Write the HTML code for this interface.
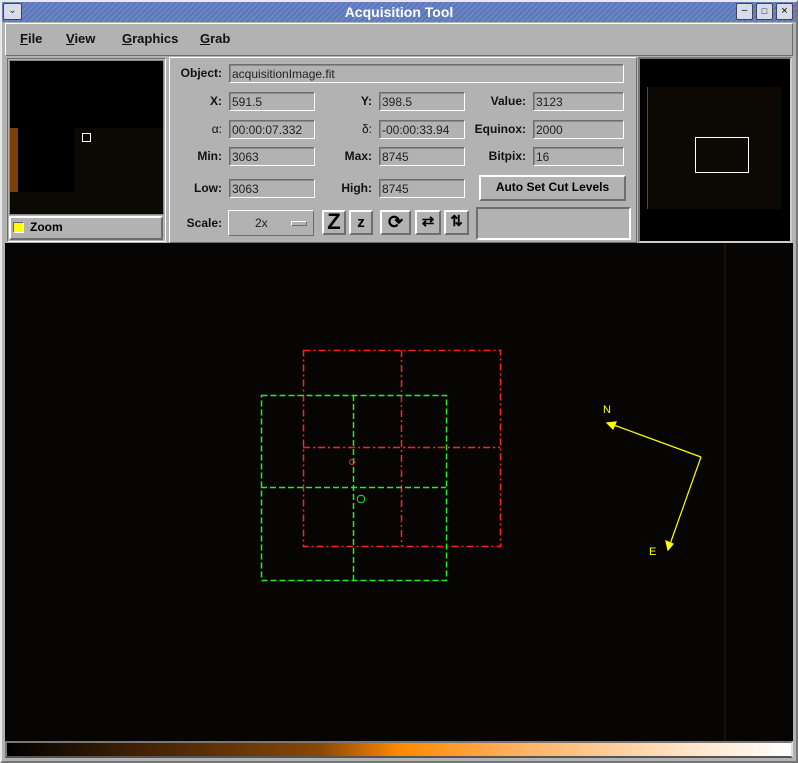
<!DOCTYPE html>
<html><head><style>
*{margin:0;padding:0;box-sizing:border-box}
body{width:798px;height:763px;background:#b2b2b2;font-family:"Liberation Sans",sans-serif;position:relative;overflow:hidden}
.a{position:absolute}
.t{font-size:12px;font-weight:bold;color:#111;text-align:right}
.f{position:absolute;background:#b2b2b2;border:1px solid;border-color:#6e6e6e #fff #fff #6e6e6e;box-shadow:inset 1px 1px 0 #8a8a8a;font-size:12px;color:#222;padding:2px 0 0 2px;height:19px}
.b{position:absolute;background:#b2b2b2;border:2px solid;border-color:#fff #6e6e6e #6e6e6e #fff}
.m{position:absolute;top:31px;font-size:13px;font-weight:bold;color:#111}
</style></head><body>
<div class="a" style="left:0;top:0;width:798px;height:763px;border:2px solid;border-color:#e8e8e8 #777 #777 #e8e8e8"></div>
<!-- title -->
<div class="a" style="left:2px;top:2px;width:794px;height:20px;background:repeating-linear-gradient(135deg,#6a86c4 0 2px,#5b77b8 2px 4px)"></div>
<div class="a" style="left:3px;top:3px;width:19px;height:17px;background:#d8dce8;border:1px solid #445;border-radius:2px;font-size:10px;text-align:center;color:#334;line-height:14px">&#8964;</div>
<div class="a" style="left:0;top:3px;width:798px;text-align:center;color:#fff;font-size:14px;font-weight:bold;line-height:18px">Acquisition Tool</div>
<div class="a" style="left:736px;top:3px;width:17px;height:17px;background:#d8dce8;border:1px solid #445;border-radius:2px;font-size:10px;text-align:center;line-height:14px">&#8211;</div>
<div class="a" style="left:756px;top:3px;width:17px;height:17px;background:#d8dce8;border:1px solid #445;border-radius:2px;font-size:9px;text-align:center;line-height:14px">&#9633;</div>
<div class="a" style="left:776px;top:3px;width:17px;height:17px;background:#d8dce8;border:1px solid #445;border-radius:2px;font-size:11px;text-align:center;line-height:14px">&#215;</div>
<!-- menu -->
<div class="a" style="left:5px;top:23px;width:788px;height:33px;border:1px solid;border-color:#fff #6e6e6e #6e6e6e #fff"></div>
<div class="m" style="left:20px"><u>F</u>ile</div>
<div class="m" style="left:66px"><u>V</u>iew</div>
<div class="m" style="left:122px"><u>G</u>raphics</div>
<div class="m" style="left:200px"><u>G</u>rab</div>
<!-- zoom panel -->
<div class="a" style="left:7px;top:58px;width:159px;height:184px;border:1px solid;border-color:#6e6e6e #fff #fff #6e6e6e"></div>
<div class="a" style="left:9px;top:60px;width:155px;height:155px;background:#000;border:1px solid #888"></div>
<div class="a" style="left:75px;top:128px;width:88px;height:86px;background:#0c0804"></div>
<div class="a" style="left:10px;top:128px;width:8px;height:64px;background:#7a4008"></div>
<div class="a" style="left:10px;top:192px;width:153px;height:22px;background:#0c0804"></div>
<div class="a" style="left:82px;top:133px;width:9px;height:9px;border:1px solid #fff"></div>
<div class="b" style="left:9px;top:216px;width:154px;height:24px"></div>
<div class="a" style="left:13px;top:222px;width:11px;height:11px;background:#ff0;border:1px solid;border-color:#666 #fff #fff #666"></div>
<div class="a" style="left:30px;top:220px;font-size:12px;font-weight:bold">Zoom</div>
<!-- info panel -->
<div class="a" style="left:169px;top:57px;width:468px;height:186px;border:1px solid;border-color:#fff #6e6e6e #6e6e6e #fff"></div>
<div class="a t" style="left:150px;top:66px;width:72px">Object:</div>
<div class="f" style="left:229px;top:64px;width:395px">acquisitionImage.fit</div>
<div class="a t" style="left:150px;top:94px;width:72px">X:</div>
<div class="f" style="left:229px;top:92px;width:86px">591.5</div>
<div class="a t" style="left:300px;top:94px;width:72px">Y:</div>
<div class="f" style="left:379px;top:92px;width:86px">398.5</div>
<div class="a t" style="left:450px;top:94px;width:76px">Value:</div>
<div class="f" style="left:533px;top:92px;width:91px">3123</div>
<div class="a t" style="left:150px;top:122px;width:72px;font-weight:normal">&#945;:</div>
<div class="f" style="left:229px;top:120px;width:86px">00:00:07.332</div>
<div class="a t" style="left:300px;top:122px;width:72px;font-weight:normal">&#948;:</div>
<div class="f" style="left:379px;top:120px;width:86px">-00:00:33.94</div>
<div class="a t" style="left:450px;top:122px;width:76px">Equinox:</div>
<div class="f" style="left:533px;top:120px;width:91px">2000</div>
<div class="a t" style="left:150px;top:149px;width:72px">Min:</div>
<div class="f" style="left:229px;top:147px;width:86px">3063</div>
<div class="a t" style="left:300px;top:149px;width:72px">Max:</div>
<div class="f" style="left:379px;top:147px;width:86px">8745</div>
<div class="a t" style="left:450px;top:149px;width:76px">Bitpix:</div>
<div class="f" style="left:533px;top:147px;width:91px">16</div>
<div class="a t" style="left:150px;top:181px;width:72px">Low:</div>
<div class="f" style="left:229px;top:179px;width:86px;border-color:#6e6e6e #fff #fff #6e6e6e">3063</div>
<div class="a t" style="left:300px;top:181px;width:72px">High:</div>
<div class="f" style="left:379px;top:179px;width:86px">8745</div>
<div class="b" style="left:479px;top:175px;width:147px;height:26px;font-size:12px;font-weight:bold;text-align:center;line-height:21px">Auto Set Cut Levels</div>
<div class="a t" style="left:150px;top:216px;width:72px">Scale:</div>
<div class="b" style="left:228px;top:210px;width:86px;height:26px;border-width:1px"></div>
<div class="a" style="left:255px;top:216px;font-size:12px;color:#222">2x</div>
<div class="b" style="left:291px;top:221px;width:16px;height:5px;border-width:1px"></div>
<div class="b" style="left:322px;top:210px;width:24px;height:25px;font-size:22px;font-weight:bold;text-align:center;line-height:20px">Z</div>
<div class="b" style="left:349px;top:210px;width:24px;height:25px;font-size:15px;font-weight:bold;text-align:center;line-height:21px">z</div>
<div class="b" style="left:380px;top:210px;width:31px;height:25px;font-size:18px;font-weight:bold;text-align:center;line-height:20px">&#10227;</div>
<div class="b" style="left:415px;top:210px;width:26px;height:25px;font-size:15px;font-weight:bold;text-align:center;line-height:20px">&#8644;</div>
<div class="b" style="left:444px;top:210px;width:25px;height:25px;font-size:15px;font-weight:bold;text-align:center;line-height:20px">&#8645;</div>
<div class="a" style="left:476px;top:207px;width:155px;height:33px;border:2px solid;border-color:#6e6e6e #fff #fff #6e6e6e"></div>
<!-- pan panel -->
<div class="a" style="left:638px;top:57px;width:154px;height:186px;background:#000;border:2px solid;border-color:#777 #ccc #ccc #777"></div>
<div class="a" style="left:647px;top:87px;width:134px;height:122px;background:#0c0804;border-left:1px solid #7a4008"></div>
<div class="a" style="left:695px;top:137px;width:54px;height:36px;border:1px solid #fff"></div>
<!-- main image -->
<div class="a" style="left:5px;top:243px;width:788px;height:498px;background:#070504"></div>
<div class="a" style="left:724px;top:243px;width:2px;height:498px;background:#1c0e04"></div>
<svg class="a" style="left:0;top:0" width="798" height="763">
<g fill="none" stroke="#ff2020" stroke-width="1.5" stroke-dasharray="7,3,2,3">
<rect x="303.5" y="350.5" width="197" height="196"/>
<line x1="401.5" y1="350" x2="401.5" y2="546"/>
<line x1="303" y1="447.5" x2="500" y2="447.5"/>
</g>
<g fill="none" stroke="#20ee20" stroke-width="1.5" stroke-dasharray="6,3">
<rect x="261.5" y="395.5" width="185" height="185"/>
<line x1="353.5" y1="395" x2="353.5" y2="580"/>
<line x1="261" y1="487.5" x2="446" y2="487.5"/>
</g>
<circle cx="352" cy="462" r="2.5" fill="none" stroke="#f22" stroke-width="1"/>
<circle cx="361" cy="499" r="3.8" fill="none" stroke="#2e2" stroke-width="1"/>
<g stroke="#ff0" stroke-width="1.2" fill="#ff0">
<line x1="701" y1="457" x2="611" y2="424"/>
<line x1="701" y1="457" x2="669" y2="547"/>
<polygon points="607,423 616,422 613,429"/>
<polygon points="668,550 666,541 673,544"/>
</g>
<text x="603" y="413" fill="#ff0" font-size="11" font-family="Liberation Sans">N</text>
<text x="649" y="555" fill="#ff0" font-size="11" font-family="Liberation Sans">E</text>
</svg>
<!-- colorbar -->
<div class="a" style="left:5px;top:741px;width:788px;height:17px;border:2px solid;border-color:#777 #ddd #555 #777;background:linear-gradient(90deg,#000 0%,#3a1e05 15%,#8a4806 40%,#ff8800 50%,#ffb060 65%,#ffe0c0 85%,#fff 100%)"></div>
</body></html>
